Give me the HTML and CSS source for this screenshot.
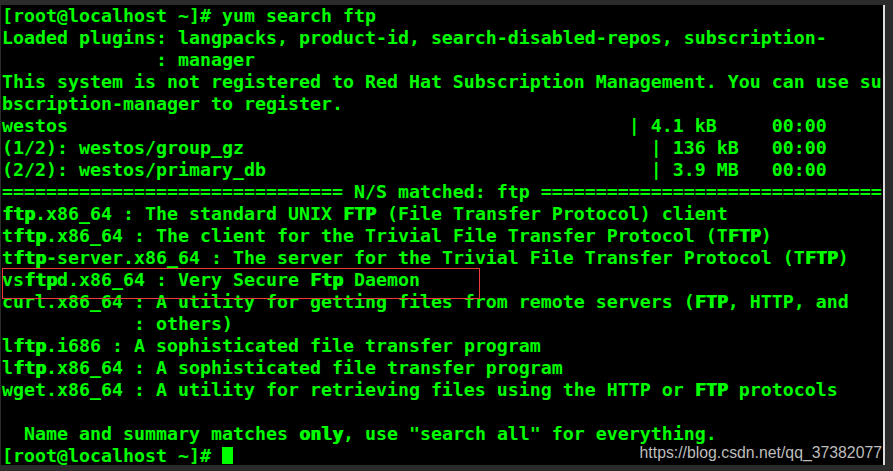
FILE: index.html
```html
<!DOCTYPE html>
<html>
<head>
<meta charset="utf-8">
<link rel="stylesheet" href="styles.css">
</head>
<body>
<div class="frame">
  <div class="term">
<pre class="out">[root@localhost ~]# yum search ftp
Loaded plugins: langpacks, product-id, search-disabled-repos, subscription-
              : manager
This system is not registered to Red Hat Subscription Management. You can use su
bscription-manager to register.
westos                                                   | 4.1 kB     00:00
(1/2): westos/group_gz                                     | 136 kB   00:00
(2/2): westos/primary_db                                   | 3.9 MB   00:00
=============================== N/S matched: ftp ===============================
<span class="hl">ftp</span>.x86_64 : The standard UNIX <span class="hl">FTP</span> (File Transfer Protocol) client
t<span class="hl">ftp</span>.x86_64 : The client for the Trivial File Transfer Protocol (T<span class="hl">FTP</span>)
t<span class="hl">ftp</span>-server.x86_64 : The server for the Trivial File Transfer Protocol (T<span class="hl">FTP</span>)
vs<span class="hl">ftp</span>d.x86_64 : Very Secure <span class="hl">Ftp</span> Daemon
curl.x86_64 : A utility for getting files from remote servers (<span class="hl">FTP</span>, HTTP, and
            : others)
l<span class="hl">ftp</span>.i686 : A sophisticated file transfer program
l<span class="hl">ftp</span>.x86_64 : A sophisticated file transfer program
wget.x86_64 : A utility for retrieving files using the HTTP or <span class="hl">FTP</span> protocols

  Name and summary matches <span class="hl">only</span>, use "search all" for everything.
[root@localhost ~]# <span class="cursor"></span></pre>
    <div class="mark"></div>
    <div class="wm">https://blog.csdn.net/qq_37382077</div>
  </div>
  <div class="scroll"></div>
</div>
</body>
</html>
```

FILE: styles.css
```css
html, body {
  margin: 0;
  padding: 0;
  background: #2b2b2b;
}
.frame {
  display: flex;
  width: 893px;
  height: 471px;
  padding-top: 5px;
  box-sizing: border-box;
}
.term {
  position: relative;
  margin-left: 1px;
  width: 882px;
  height: 460px;
  background: #000;
  overflow: hidden;
}
.out {
  margin: 0;
  padding-left: 1px;
  font-family: "DejaVu Sans Mono", monospace;
  font-weight: bold;
  font-size: 18.27px;
  line-height: 22px;
  color: #00ff00;
  white-space: pre;
}
.hl {
  text-shadow: 1px 0 0 #00ff00;
}
.cursor {
  display: inline-block;
  width: 11px;
  height: 17px;
  background: #00ff00;
  vertical-align: -2px;
}
.mark {
  position: absolute;
  left: 1px;
  top: 263px;
  width: 476px;
  height: 29px;
  border: 1px solid #f03a3a;
}
.wm {
  position: absolute;
  right: 1px;
  bottom: 3px;
  font-family: "Liberation Sans", Arial, sans-serif;
  font-size: 15.8px;
  line-height: 18px;
  color: #bdbdbd;
}
.scroll {
  width: 2px;
  height: 460px;
  background: #dcdcdc;
}
```
